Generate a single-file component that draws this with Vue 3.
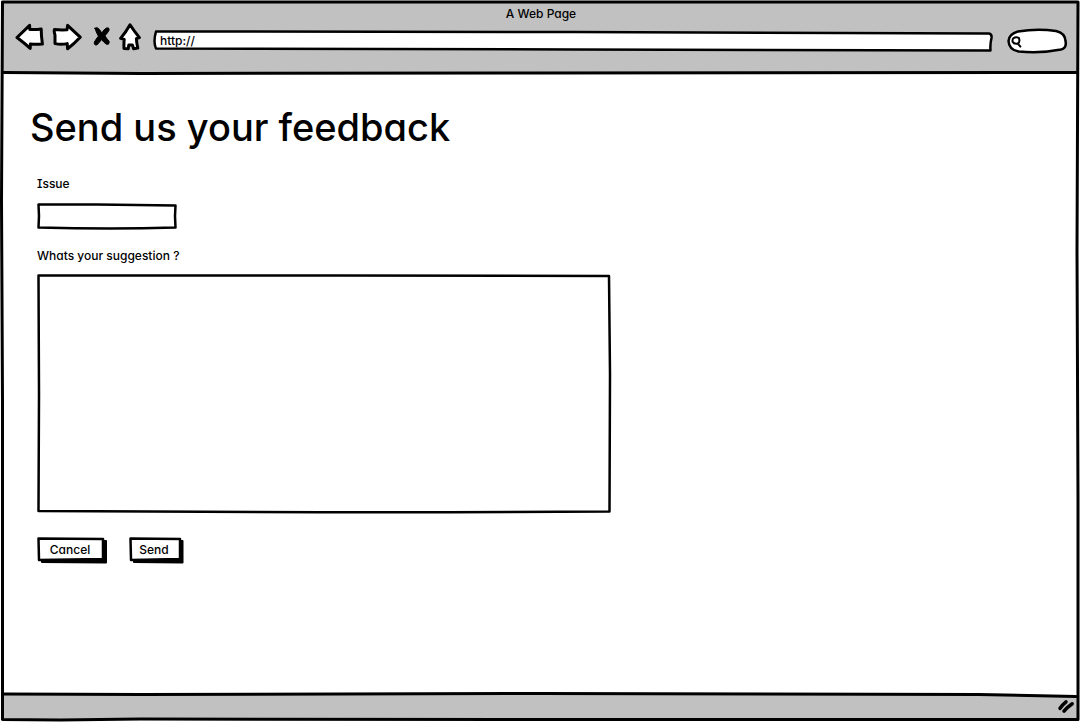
<script setup>
import { ref } from 'vue'

const address = ref('http://')
const query = ref('')
const issue = ref('')
const suggestion = ref('')
</script>

<template>
  <div class="window">
    <header class="chrome">
      <div class="title">A Web Page</div>
      <div class="toolbar">
        <nav class="nav" aria-label="Browser">
          <button type="button" aria-label="Back">
            <svg width="30" height="28" viewBox="15 23 30 28">
              <path class="shape" d="M17 37.5 L29.6 25.4 L29.8 29.4 Q36 29.8 41.2 28.9 Q41.2 36 42.4 44 Q36 44.4 30.4 44 L30.2 48.4 Q25 43.5 17 37.5Z" />
            </svg>
          </button>
          <button type="button" aria-label="Forward">
            <svg width="30" height="28" viewBox="52 23 30 28">
              <path class="shape" d="M80.2 37.2 Q73 30.5 67.6 25.4 L67 29.8 Q61 30.2 54.4 29.6 Q53.8 31.5 55 35 L55 43.6 Q61 44.8 67.2 43.6 L67.6 48.8 Q74 43.8 80.2 37.2Z" />
            </svg>
          </button>
          <button type="button" aria-label="Stop">
            <svg width="23" height="28" viewBox="89 23 23 28">
              <path class="cross" d="M95 28.2 Q97 26.6 99.2 29.2 Q100.6 31 101.8 33 Q103.6 29.6 106.4 28 Q109.4 27 109.2 30 Q107.6 33 105 35.8 Q106.6 38.6 109.2 41.4 Q109.6 44.8 106.8 44.4 Q103.6 42.4 101.6 39.6 Q99.4 42.6 96.8 45 Q93.6 45.4 94.4 42 Q96.2 38.8 98.4 36.2 Q96 32 95 28.2Z" />
            </svg>
          </button>
          <button type="button" aria-label="Home">
            <svg width="22" height="28" viewBox="119 23 22 28">
              <path class="shape" d="M130 24.8 Q134 31 139.4 37.6 L136.4 38.6 Q136.6 43 137.8 48 L133.6 48.8 L132.4 45 L128.8 45 L128.2 48.8 L124 48.4 Q123.8 43 124.2 39.4 L120.6 38.4 Q126 32 130 24.8Z" />
            </svg>
          </button>
        </nav>
        <div class="sketch address">
          <svg class="outline" viewBox="0 0 840 22" preserveAspectRatio="none" aria-hidden="true">
            <path d="M3 1.5 L420 2 L836 3.5 Q839 4 838.5 8 Q837 14 837.5 20.5 L420 19.5 L3 18.5 Q0 12 3 1.5Z" />
          </svg>
          <input v-model="address" type="text" aria-label="Address">
        </div>
        <div class="sketch search">
          <svg class="outline" viewBox="0 0 60 26" preserveAspectRatio="none" aria-hidden="true">
            <path d="M11 3.5 Q30 .5 49 3 Q58 5 58.5 13 Q60 20 54 21.5 Q34 25.5 12 23.5 Q2 22 1.5 13 Q2 6 11 3.5Z" />
          </svg>
          <svg class="lens" width="14" height="14" viewBox="0 0 14 14" aria-hidden="true">
            <path d="M3.4 3.2 Q6 1.2 9 3 Q10.2 7.6 7.8 8.6 Q4 9.4 2.6 6.8 Q2.2 4.6 3.4 3.2Z M7.6 8.4 L10.4 11.6" />
          </svg>
          <input v-model="query" type="text" aria-label="Search">
        </div>
      </div>
      <svg class="rule header-rule" viewBox="0 0 1080 6" preserveAspectRatio="none" aria-hidden="true">
        <path d="M2 2.5 L140 3.5 L540 3 L1078 2.5" />
      </svg>
    </header>

    <main class="content">
      <h1>Send us your feedback</h1>
      <form @submit.prevent>
        <label for="issue">Issue</label>
        <div class="sketch issue">
          <svg class="outline" viewBox="0 0 140 26" preserveAspectRatio="none" aria-hidden="true">
            <path d="M1.5 1.5 L60 1.5 L138.5 2.5 Q137.5 13 138.5 24.5 Q75 26.6 1.5 24.5 Q2.5 13 1.5 1.5Z" />
          </svg>
          <input id="issue" v-model="issue" type="text">
        </div>
        <label for="suggestion">Whats your suggestion ?</label>
        <div class="sketch suggestion">
          <svg class="outline" viewBox="0 0 574 239" preserveAspectRatio="none" aria-hidden="true">
            <path d="M1.5 1.5 L300 1.5 L572 2 L573 100 L572.5 237.5 Q330 239 1.5 237 L2 120Z" />
          </svg>
          <textarea id="suggestion" v-model="suggestion"></textarea>
        </div>
        <div class="actions">
          <button type="button" class="sketch action cancel">
            <svg class="outline" viewBox="0 0 70 26" preserveAspectRatio="none" aria-hidden="true">
              <path class="shadow" d="M5 22 H66 V4 H69 V25.5 L5 25Z" />
              <path d="M1.5 1.5 L66 2 L66 22 L2 23Z" />
            </svg>
            <span>Cancel</span>
          </button>
          <button type="submit" class="sketch action send">
            <svg class="outline" viewBox="0 0 54 26" preserveAspectRatio="none" aria-hidden="true">
              <path class="shadow" d="M5 22 H50 V4 H53.5 V25.5 L5 25Z" />
              <path d="M1.5 1.5 L51 2 L51 22 L2 23Z" />
            </svg>
            <span>Send</span>
          </button>
        </div>
      </form>
    </main>

    <footer class="status">
      <svg class="rule footer-rule" viewBox="0 0 1080 6" preserveAspectRatio="none" aria-hidden="true">
        <path class="blank" d="M0 0 H1080 V5 L980 2.5 L540 1.5 L0 2Z" />
        <path d="M2 2 L140 2.5 L540 1.5 L980 2.5 L1078 4.5" />
      </svg>
      <svg class="grip" width="18" height="16" viewBox="1057 701 18 16" aria-hidden="true">
        <path d="M1060 711.4 Q1061.6 708.4 1066 704.8 M1064 714.2 Q1067 710.4 1072.2 706.8" />
      </svg>
    </footer>

    <svg class="frame" viewBox="0 0 1080 722" preserveAspectRatio="none" aria-hidden="true">
      <path d="M2.5 2 L540 2 L1078 2 L1077 250 L1078 500 L1078 719.5 L540 719.5 L140 719 L60 720 L2.5 719.5 L2.5 400 L1.5 200Z" />
    </svg>
  </div>
</template>

<style>
body {
  background: #fff;
}
</style>

<style scoped>
.window {
  position: relative;
  display: flex;
  flex-direction: column;
  box-sizing: border-box;
  min-height: 100vh;
  padding: 2px 2px 3px;
  color: #000;
  font-family: Inter, Lato, sans-serif;
  font-feature-settings: "cv08", "cv11";
  font-size: 12px;
  font-weight: 500;
  line-height: 16px;
}

svg {
  display: block;
}

button,
input,
textarea {
  margin: 0;
  padding: 0;
  border: 0;
  outline: 0;
  background: none;
  color: inherit;
  font: inherit;
  font-feature-settings: inherit;
}

path {
  fill: none;
  stroke: #000;
  stroke-width: 3px;
  stroke-linecap: round;
  stroke-linejoin: round;
}

.chrome {
  position: relative;
  padding: 4px 11px 19px 13px;
  background: #c1c1c1;
}

.title {
  text-align: center;
}

.toolbar {
  display: flex;
  align-items: center;
  height: 32px;
}

.nav {
  display: flex;
  gap: 7px;
  margin-right: 12px;
  padding-bottom: 2px;
}

.shape {
  fill: #fff;
}

.cross {
  fill: #000;
  stroke-width: 1px;
}

.sketch {
  position: relative;
}

.sketch input,
.sketch textarea,
.sketch span {
  position: relative;
  display: block;
  box-sizing: border-box;
  width: 100%;
  height: 100%;
}

.outline,
.frame {
  position: absolute;
  inset: 0;
  width: 100%;
  height: 100%;
  overflow: visible;
  pointer-events: none;
}

.outline path,
.frame path,
.rule path {
  vector-effect: non-scaling-stroke;
}

.outline path {
  fill: #fff;
  stroke-width: 2.5px;
}

.outline .shadow {
  fill: #000;
  stroke-width: 2px;
}

.address {
  flex: 1;
  height: 22px;
  margin-top: 6px;
  margin-right: 14px;
}

.address input {
  padding: 0 7px 2px;
}

.search {
  width: 60px;
  height: 26px;
  margin-top: 6px;
}

.search input {
  padding: 0 8px 0 18px;
}

.lens {
  position: absolute;
  top: 7px;
  left: 3px;
}

.lens path {
  stroke-width: 2px;
}

.rule {
  position: absolute;
  left: 0;
  width: 100%;
  height: 6px;
  overflow: visible;
}

.rule .blank {
  fill: #fff;
  stroke: none;
}

.header-rule {
  bottom: -3px;
}

.footer-rule {
  top: 0;
}

.content {
  flex: 1;
  padding: 30px 28px 24px;
}

h1 {
  margin: 0;
  font-size: 38px;
  font-weight: 500;
  line-height: 48px;
}

form {
  padding: 25px 7px 0;
}

label {
  display: block;
  width: fit-content;
}

.issue {
  width: 140px;
  height: 26px;
  margin: 11px 0 19px;
}

.issue input {
  padding: 0 6px;
}

.suggestion {
  max-width: 574px;
  height: 239px;
  margin: 10px 0 24px;
}

.suggestion textarea {
  padding: 6px;
  resize: none;
}

.actions {
  display: flex;
  gap: 22px;
}

.action {
  height: 26px;
  text-align: center;
}

.cancel {
  width: 70px;
}

.send {
  width: 54px;
}

.action span {
  padding: 5px 4px 0 0;
}

.status {
  position: relative;
  display: flex;
  align-items: center;
  justify-content: flex-end;
  height: 27px;
  padding-right: 3px;
  background: #c1c1c1;
}

.grip path {
  stroke-width: 3.5px;
}
</style>
